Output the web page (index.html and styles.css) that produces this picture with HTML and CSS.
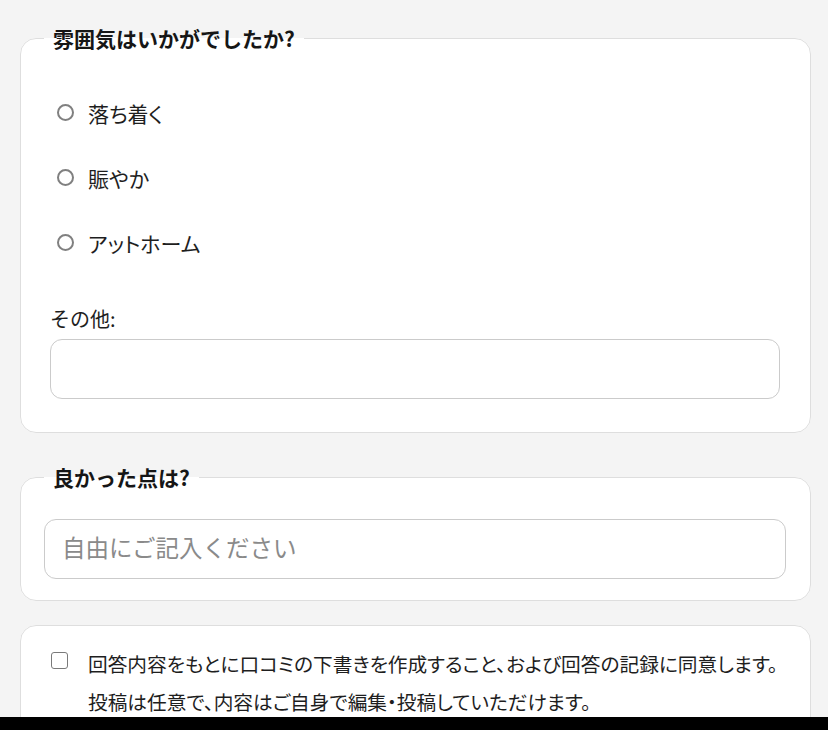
FILE: index.html
```html
<!DOCTYPE html>
<html lang="ja">
<head>
    <meta charset="UTF-8">
    <meta name="viewport" content="width=device-width, initial-scale=1.0">
    <title>アンケート</title>
    <link rel="stylesheet" href="styles.css">
</head>
<body>
    <form class="survey">
        <fieldset class="card mood">
            <legend>雰囲気はいかがでしたか?</legend>
            <div class="options">
                <label class="option"><input type="radio" name="mood" value="calm"> 落ち着く</label>
                <label class="option"><input type="radio" name="mood" value="lively"> 賑やか</label>
                <label class="option"><input type="radio" name="mood" value="homey"> アットホーム</label>
            </div>
            <div class="other">
                <label for="moodOther">その他:</label>
                <input type="text" id="moodOther" class="text-input">
            </div>
        </fieldset>

        <fieldset class="card good">
            <legend>良かった点は?</legend>
            <input type="text" class="text-input free" placeholder="自由にご記入ください">
        </fieldset>

        <fieldset class="card consent">
            <label class="agree">
                <input type="checkbox" name="agree">
                <span>回答内容をもとに口コミの下書きを作成すること、および回答の記録に同意します。<br>投稿は任意で、内容はご自身で編集・投稿していただけます。</span>
            </label>
        </fieldset>
    </form>

    <div class="bottom-bar"></div>
</body>
</html>
```

FILE: styles.css
```css
* {
    margin: 0;
    padding: 0;
    box-sizing: border-box;
}

body {
    font-family: "Noto Sans CJK JP", "Noto Sans", sans-serif;
    background: #f4f4f4;
    color: #1e1e1e;
}

.survey {
    padding: 24px 17px 40px 20px;
}

.card {
    background: #fff;
    border: 1px solid #dedede;
    border-radius: 16px;
    padding: 0 24px 0 23px;
}

.card legend {
    padding: 0 9px;
    font-size: 21px;
    font-weight: bold;
    line-height: 28px;
    color: #161616;
}

/* radios */
.options {
    margin-top: 28px;
}

.option {
    display: flex;
    align-items: center;
    height: 65px;
    padding-left: 13px;
    font-size: 21px;
    gap: 14px;
    font-feature-settings: "palt";
}

.option input {
    appearance: none;
    width: 17px;
    height: 17px;
    border: 2px solid #808080;
    border-radius: 50%;
    background: #fff;
    flex-shrink: 0;
}

.other {
    margin: 30px 6px 0 6px;
    padding-bottom: 33px;
}

.other label {
    display: block;
    font-size: 20px;
    line-height: 28px;
    margin-bottom: 6px;
}

.text-input {
    display: block;
    width: 100%;
    height: 60px;
    border: 1px solid #cbcbcb;
    border-radius: 12px;
    background: #fff;
    font-family: inherit;
    font-size: 20px;
    padding: 0 17px;
    outline: none;
}

.good {
    margin-top: 30px;
    padding-bottom: 21px;
}

.good .free {
    margin-top: 28px;
    font-size: 23.5px;
    padding-bottom: 4px;
}

.free::placeholder {
    color: #8a8a8a;
}

.consent {
    margin-top: 24px;
    padding-top: 19px;
    padding-bottom: 20px;
}

.agree {
    display: flex;
    align-items: flex-start;
    gap: 20px;
    padding-left: 7px;
    font-size: 19.7px;
    line-height: 38px;
    font-feature-settings: "palt";
}

.agree input {
    appearance: none;
    width: 17px;
    height: 17px;
    margin-top: 7px;
    border: 1.5px solid #7a7a7a;
    border-radius: 3px;
    background: #fff;
    flex-shrink: 0;
}

.bottom-bar {
    position: fixed;
    left: 0;
    right: 0;
    bottom: 0;
    height: 13px;
    background: #000;
}
```
